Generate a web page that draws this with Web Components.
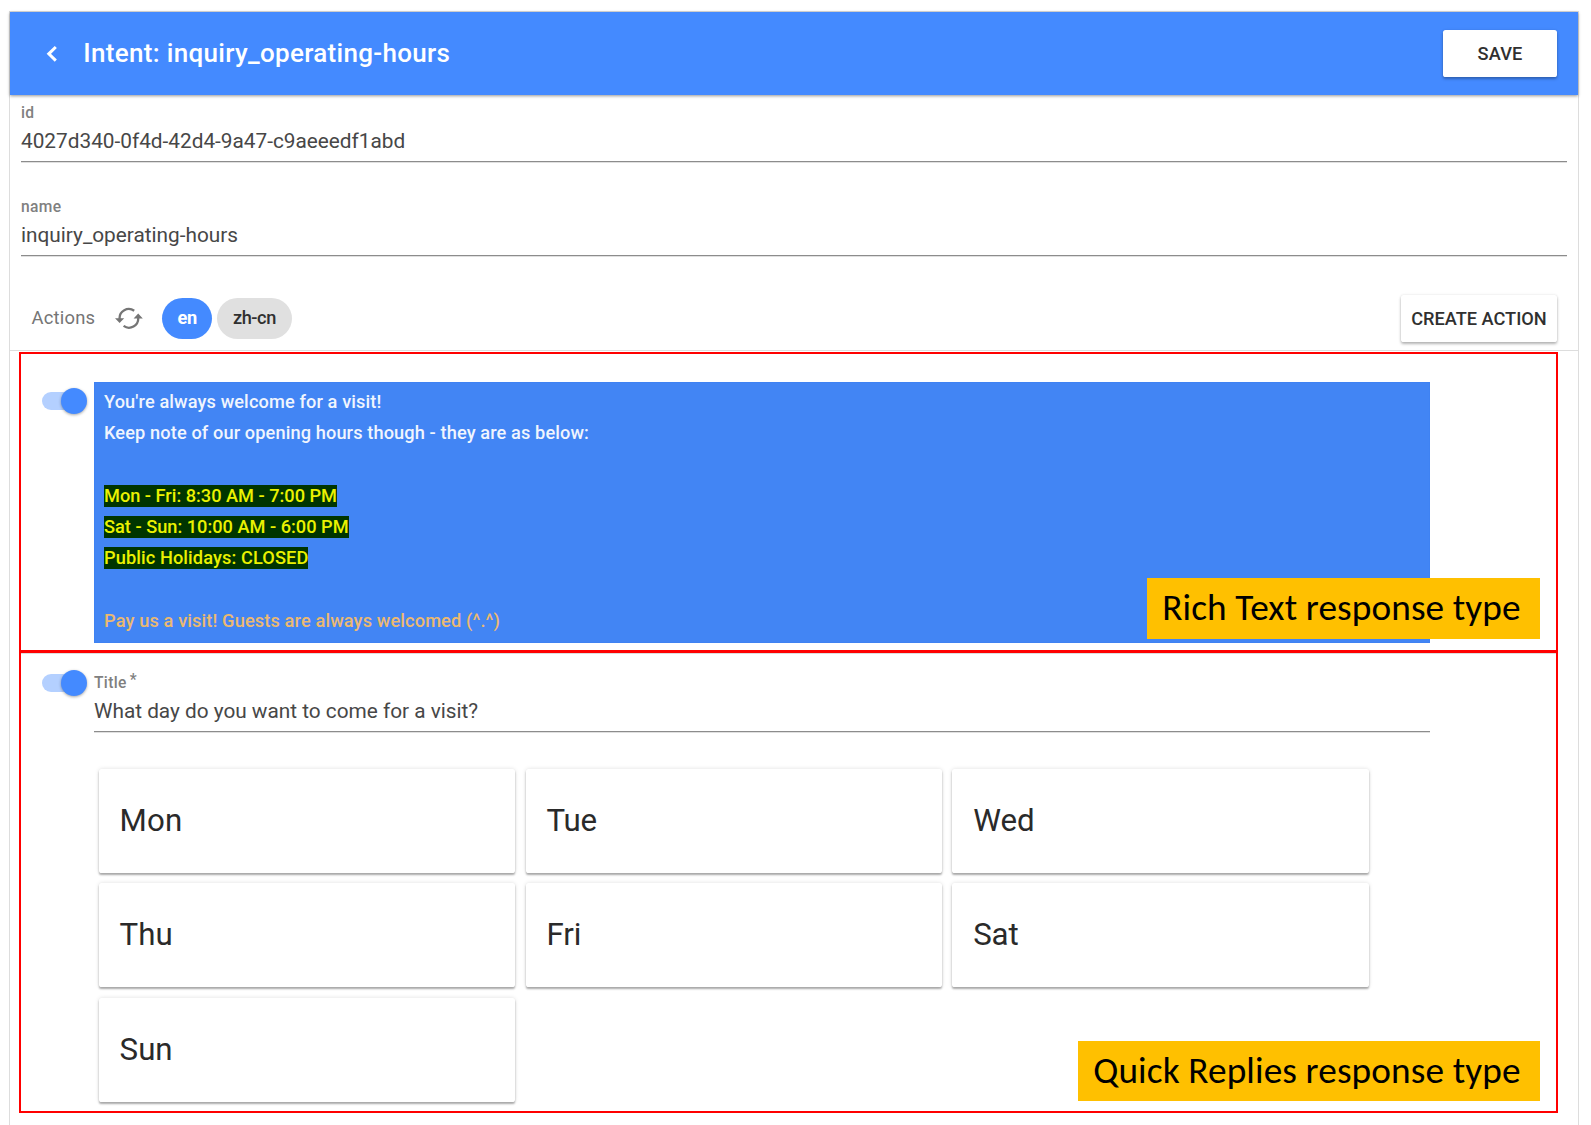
<!DOCTYPE html>
<html lang="en">
<head>
<meta charset="utf-8">
<title>Intent: inquiry_operating-hours</title>
<style>
html,body{margin:0;padding:0;background:#fff;height:1125px;overflow:hidden;font-family:Roboto,"Liberation Sans",sans-serif;color:#212121}
</style>
</head>
<body>
<intent-page></intent-page>
<script>
// Single-line text; "w" spreads its letters over an exact width.
class UiText extends HTMLElement{
  connectedCallback(){
    if(this.shadowRoot)return;
    this.attachShadow({mode:'open'}).innerHTML=`<style>:host{display:inline-block;white-space:pre}span{display:inline-block}</style><span><slot></slot></span>`;
    const w=parseFloat(this.getAttribute('w'));
    if(!w)return;
    const s=this.shadowRoot.querySelector('span');
    const n=this.textContent.length;
    const nat=s.getBoundingClientRect().width;
    s.style.letterSpacing=((w-nat)/n).toFixed(4)+'px';
  }
}
customElements.define('ui-text',UiText);

class UiButton extends HTMLElement{
  constructor(){super();this.attachShadow({mode:'open'}).innerHTML=`<style>
  :host{display:flex;align-items:center;justify-content:center;box-sizing:border-box;height:47px;background:#fff;border-radius:2.6px;font-size:18.2px;font-weight:500;line-height:24px;color:#303030;box-shadow:0 2px 3px rgba(0,0,0,.28),0 0 3px rgba(0,0,0,.1)}
  </style><slot></slot>`}
}
customElements.define('ui-button',UiButton);

class AppToolbar extends HTMLElement{
  constructor(){super();this.attachShadow({mode:'open'}).innerHTML=`<style>
  :host{display:flex;align-items:center;box-sizing:border-box;height:83.4px;padding:0 21px 0 36px;background:#448aff;color:#fff;position:relative;box-shadow:0 1px 3px rgba(0,0,0,.42)}
  svg{display:block;width:12px;height:18px}
  .t{flex:1;margin-left:25.3px;font-size:26px;font-weight:500;line-height:34px;padding-bottom:1px}
  </style><svg viewBox="0 0 12 18"><path d="M9.8 2 2.8 8.8l7 6.8" fill="none" stroke="#fff" stroke-width="3"/></svg>
  <div class="t"><slot></slot></div><slot name="action"></slot>`}
}
customElements.define('app-toolbar',AppToolbar);

class FormField extends HTMLElement{
  constructor(){super();this.attachShadow({mode:'open'}).innerHTML=`<style>
  :host{display:block;border-bottom:1px solid #8c8c8c;box-shadow:0 1px 0 #e0e0e0}
  .l{height:18px;line-height:18px;font-size:15.6px;font-weight:500;color:#808080;display:flex}
  .v{height:39.3px;line-height:39px;font-size:20.8px;color:#474747}
  </style><div class="l"><slot name="label"></slot></div><div class="v"><slot></slot></div>`}
}
customElements.define('form-field',FormField);

class LangChip extends HTMLElement{
  constructor(){super();this.attachShadow({mode:'open'}).innerHTML=`<style>
  :host{display:flex;align-items:center;justify-content:center;height:41.6px;border-radius:21px;background:#e0e0e0;color:#303030;font-size:18.2px;font-weight:500;line-height:24px}
  :host([active]){background:#448aff;color:#fff;font-weight:700}
  </style><slot></slot>`}
}
customElements.define('lang-chip',LangChip);

class ToggleSwitch extends HTMLElement{
  constructor(){super();this.attachShadow({mode:'open'}).innerHTML=`<style>
  :host{display:flex;align-items:center;width:46px;height:26px;flex:none}
  .track{width:44px;height:18.2px;border-radius:9.1px;background:#b4d0ff;flex:none}
  .thumb{width:26px;height:26px;border-radius:50%;background:#448aff;margin-left:-24.3px;flex:none;box-shadow:0 1px 3px rgba(0,0,0,.35)}
  </style><div class="track"></div><div class="thumb"></div>`}
}
customElements.define('toggle-switch',ToggleSwitch);

class SyncIcon extends HTMLElement{
  constructor(){super();this.attachShadow({mode:'open'}).innerHTML=`<style>:host{display:block;width:28px;height:22px}svg{display:block}</style>
  <svg width="28" height="22" viewBox="0 0 28 22"><g fill="none" stroke="#757575" stroke-width="2.3"><path d="M4.6 12A9.2 9.2 0 0 1 19.2 3.8"/><path d="M23.2 10.8A9.2 9.2 0 0 1 8.6 18.9"/></g><path fill="#757575" d="M0 11.2h9.2l-4.6 4.8zM18.6 11.4h9.2l-4.6-4.8z"/></svg>`}
}
customElements.define('sync-icon',SyncIcon);

class ReplyCard extends HTMLElement{
  constructor(){super();this.attachShadow({mode:'open'}).innerHTML=`<style>
  :host{display:flex;align-items:center;box-sizing:border-box;height:104.2px;padding-left:20.8px;background:#fff;border-radius:2.6px;font-size:31.25px;line-height:40px;color:#2a2a2a;box-shadow:0 2px 2px rgba(0,0,0,.3),0 0 4px rgba(0,0,0,.13)}
  </style><slot></slot>`}
}
customElements.define('reply-card',ReplyCard);

class CalloutLabel extends HTMLElement{
  constructor(){super();this.attachShadow({mode:'open'}).innerHTML=`<style>
  :host{display:block;position:absolute;right:16px;box-sizing:border-box;background:#ffc000;color:#000;font:37.3px/59px Carlito,Lato,sans-serif;padding-left:15.2px}
  </style><slot></slot>`}
}
customElements.define('callout-label',CalloutLabel);

class ResponsePanel extends HTMLElement{
  constructor(){super();this.attachShadow({mode:'open'}).innerHTML=`<style>
  :host{display:flex;align-items:flex-start;position:relative;box-sizing:border-box;border:2px solid #f00;width:1539px;margin-left:9px;padding-left:20.5px}
  .body{width:1335.7px;margin-left:6.5px}
  toggle-switch{margin-top:var(--toggle-top)}
  </style><toggle-switch></toggle-switch><div class="body"><slot></slot></div><slot name="callout"></slot>`}
}
customElements.define('response-panel',ResponsePanel);

class RichText extends HTMLElement{
  constructor(){super();this.attachShadow({mode:'open'}).innerHTML=`<style>
  :host{display:block;box-sizing:border-box;height:260.4px;margin-top:28.3px;padding:4px 0 0 10px;background:#4285f4;box-shadow:inset 0 0 0 1px #3f82f2;font-size:18.2px;font-weight:500;color:#f0f5fe}
  p{margin:0;height:31.22px;line-height:31.22px}
  mark{display:inline-block;height:22px;line-height:22px;background:#003500;color:#ebf200}
  .o{color:#ecb970}
  </style>
  <p><ui-text w="277.4">You're always welcome for a visit!</ui-text></p>
  <p><ui-text w="485">Keep note of our opening hours though - they are as below:</ui-text></p>
  <p></p>
  <p><mark><ui-text w="233">Mon - Fri: 8:30 AM - 7:00 PM</ui-text></mark></p>
  <p><mark><ui-text w="244.6">Sat - Sun: 10:00 AM - 6:00 PM</ui-text></mark></p>
  <p><mark><ui-text w="204.4">Public Holidays: CLOSED</ui-text></mark></p>
  <p></p>
  <p class="o"><ui-text w="396">Pay us a visit! Guests are always welcomed (^.^)</ui-text></p>`}
}
customElements.define('rich-text',RichText);

class IntentPage extends HTMLElement{
  constructor(){super();this.attachShadow({mode:'open'}).innerHTML=`<style>
  :host{display:block;box-sizing:border-box;height:1125px;padding:11px 0 0 9px}
  .frame{width:1570px;height:1114px;box-sizing:border-box;border:1px solid #ddd;border-bottom:0}
  .fields{padding:8.3px 10.6px 0 11px;display:flex;flex-direction:column;gap:35.7px}
  .actions{display:flex;align-items:center;height:47px;padding:39px 21px 8px 21.5px;border-bottom:1px solid #ddd;margin-bottom:1px}
  .at{font-size:18.4px;font-weight:400;line-height:24px;color:#757575;padding-bottom:1.5px;width:83px}
  sync-icon{margin-right:19.9px}
  .sp{flex:1}
  .create{width:156px;padding-top:1.5px}
  .p1{height:300px;--toggle-top:34px}
  .p2{height:462px;margin-top:-1px;--toggle-top:17px;box-shadow:inset 0 1px 0 #ddd}
  .title{margin-top:21px}
  .grid{display:grid;grid-template-columns:repeat(3,416.4px);gap:10.1px 10.4px;padding:36.7px 0 0 4.8px}
  .req{margin-left:3px;line-height:13px}
  </style>
  <div class="frame">
    <app-toolbar><ui-text w="367">Intent: inquiry_operating-hours</ui-text><ui-button slot="action" style="width:114px"><ui-text w="45">SAVE</ui-text></ui-button></app-toolbar>
    <div class="fields">
      <form-field><ui-text slot="label" w="13.5">id</ui-text><ui-text w="384.2">4027d340-0f4d-42d4-9a47-c9aeeedf1abd</ui-text></form-field>
      <form-field><ui-text slot="label" w="40.5">name</ui-text><ui-text w="217">inquiry_operating-hours</ui-text></form-field>
    </div>
    <div class="actions">
      <div class="at"><ui-text w="63.8">Actions</ui-text></div>
      <sync-icon></sync-icon>
      <lang-chip active style="width:49.7px"><ui-text w="19.5">en</ui-text></lang-chip>
      <lang-chip style="width:74.3px;margin-left:5.2px"><ui-text w="43">zh-cn</ui-text></lang-chip>
      <div class="sp"></div>
      <ui-button class="create"><ui-text w="135.5">CREATE ACTION</ui-text></ui-button>
    </div>
    <response-panel class="p1"><rich-text></rich-text>
      <callout-label slot="callout" style="width:393px;height:61px;top:224px"><ui-text w="358.5">Rich Text response type</ui-text></callout-label>
    </response-panel>
    <response-panel class="p2">
      <form-field class="title"><ui-text slot="label" w="32.8">Title</ui-text><ui-text slot="label" class="req">*</ui-text><ui-text w="384.2">What day do you want to come for a visit?</ui-text></form-field>
      <div class="grid">
        <reply-card><ui-text w="62.7">Mon</ui-text></reply-card>
        <reply-card><ui-text w="50.7">Tue</ui-text></reply-card>
        <reply-card><ui-text w="61.5">Wed</ui-text></reply-card>
        <reply-card><ui-text w="53">Thu</ui-text></reply-card>
        <reply-card><ui-text w="35">Fri</ui-text></reply-card>
        <reply-card><ui-text w="45.5">Sat</ui-text></reply-card>
        <reply-card><ui-text w="53">Sun</ui-text></reply-card>
      </div>
      <callout-label slot="callout" style="width:462px;height:60px;top:388px"><ui-text w="427.5">Quick Replies response type</ui-text></callout-label>
    </response-panel>
  </div>`}
}
customElements.define('intent-page',IntentPage);
</script>
</body>
</html>
